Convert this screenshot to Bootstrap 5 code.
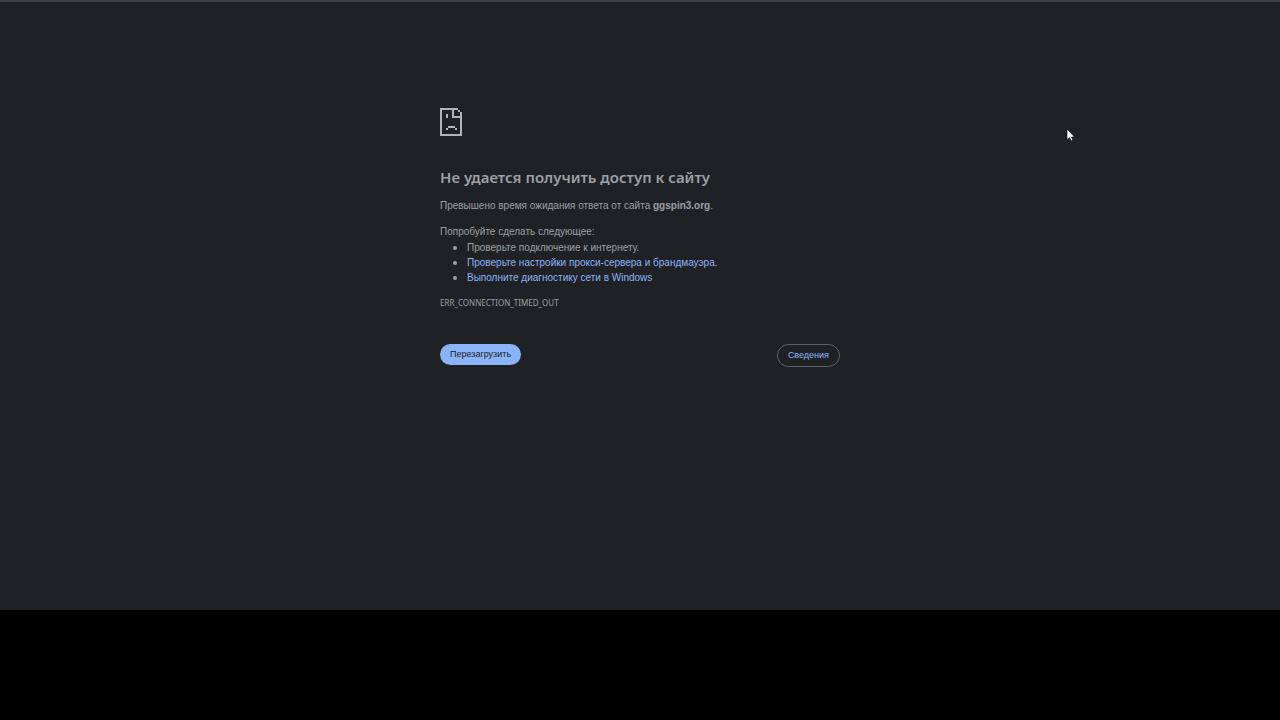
<!DOCTYPE html>
<html lang="ru">
<head>
<meta charset="utf-8">
<meta name="viewport" content="width=device-width, initial-scale=1">
<title>ggspin3.org</title>
<link href="https://cdn.jsdelivr.net/npm/bootstrap@5.3.0/dist/css/bootstrap.min.css" rel="stylesheet">
<style>
body { background: #000; color: #9aa0a6; font: 10px/16px "Liberation Sans", sans-serif; }
.page-area { background: #202124; border-top: 2px solid #3f4143; padding-top: 106px; }
.error-box { max-width: 400px; }
.error-icon { width: 22px; height: 28px; }
.error-title { font: 600 15px/20px "Noto Sans", sans-serif; margin: 31px 0 11px; }
.error-box p { margin-bottom: 10px; }
.error-box ul { padding-left: 27px; margin-bottom: 10px; line-height: 15px; }
.error-box li::marker { font-family: "Noto Sans", sans-serif; }
.error-box a { color: #8ab4f8; text-decoration: none; }
.error-code { font-family: "Noto Sans", sans-serif; font-size: 8px; }
.error-actions { margin-top: 33px; }
.error-box .btn { font: 9px/13px "Liberation Sans", sans-serif; padding: 4px 10px; }
.btn-reload, .btn-reload:hover { background: #8ab4f8; color: #202124; }
.btn-details, .btn-details:hover { border-color: #5f6368; color: #8ab4f8; }
.page-bottom { height: 110px; }
.pointer { left: 1066px; top: 128px; width: 9px; height: 14px; }
</style>
</head>
<body class="min-vh-100 d-flex flex-column position-relative">
<main class="page-area flex-grow-1">
  <div class="error-box mx-auto">
    <svg class="error-icon d-block" viewBox="0 0 22 28" fill="#b1b3b5" shape-rendering="crispEdges" aria-hidden="true">
      <path d="M0 0H18V2H20V4H22V28H0ZM2 2V26H20V10H12V2ZM14 2V8H20V4H18V2Z" fill-rule="evenodd"/>
      <path d="M6 6H8V10H6ZM8 18H15V20H8ZM6 20H8V22H6ZM15 20H17V22H15Z"/>
    </svg>
    <h1 class="error-title">Не удается получить доступ к сайту</h1>
    <p>Превышено время ожидания ответа от сайта <strong>ggspin3.org</strong>.</p>
    <div>Попробуйте сделать следующее:</div>
    <ul>
      <li>Проверьте подключение к интернету.</li>
      <li><a href="#">Проверьте настройки прокси-сервера и брандмауэра.</a></li>
      <li><a href="#">Выполните диагностику сети в Windows</a></li>
    </ul>
    <div class="error-code">ERR_CONNECTION_TIMED_OUT</div>
    <div class="error-actions d-flex justify-content-between align-items-start">
      <button type="button" class="btn btn-reload rounded-pill border-0">Перезагрузить</button>
      <button type="button" class="btn btn-details rounded-pill">Сведения</button>
    </div>
  </div>
</main>
<div class="page-bottom"></div>
<svg class="pointer position-absolute" viewBox="0 0 9 14" aria-hidden="true">
  <path d="M1 1V12L3.5 9.7L5.2 13L7 12.2L5.5 9H8.6Z" fill="#fff" stroke="#111" stroke-width=".7"/>
</svg>
<script src="https://cdn.jsdelivr.net/npm/bootstrap@5.3.0/dist/js/bootstrap.bundle.min.js"></script>
</body>
</html>
